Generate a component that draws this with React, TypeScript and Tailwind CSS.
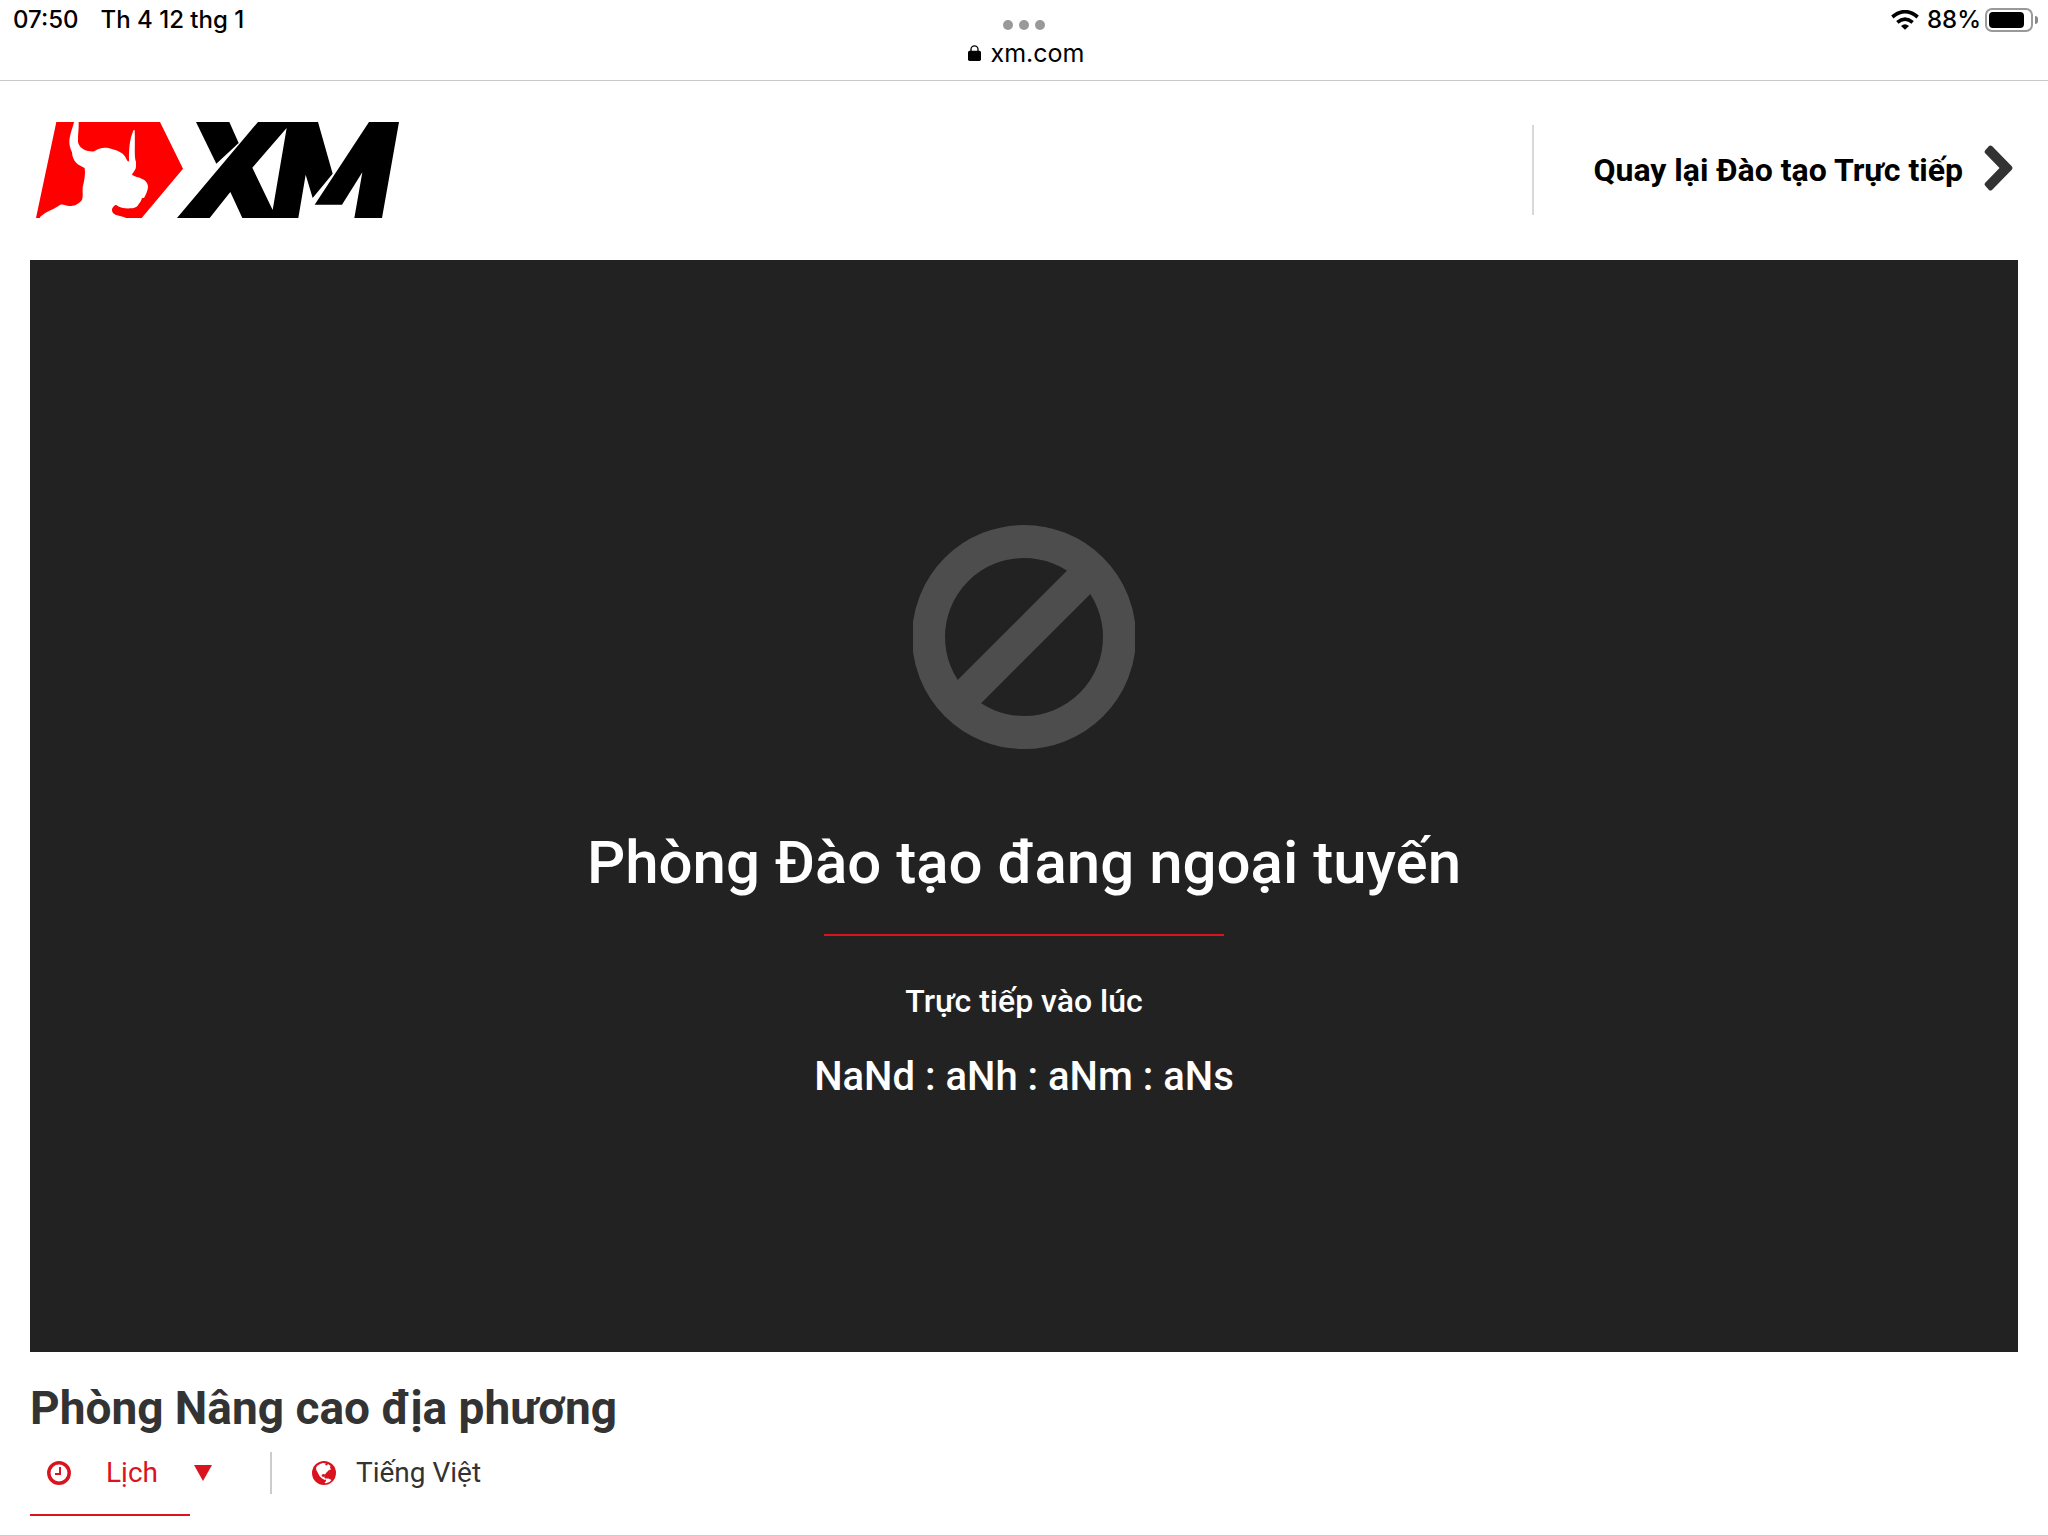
function Logo() {
  return (
    <svg viewBox="108 366 1089 288" className="block h-24 w-[363px]" aria-hidden="true">
      <path fill="#ff0000" d="M169 366H222C217 388 208 405 208 428C209 441 213 449 216 457C217 484 234 496 254 504C257 522 253 541 248 562C247 576 250 590 246 600C233 615 222 618 208 618C198 618 188 611 180 615C168 624 152 630 141 636C132 641 126 646 120 651V654H108Z" />
      <path fill="#ff0000" d="M236 366H480L549 506L425 654H378C370 648 356 648 346 644C338 641 334 632 337 625C341 617 347 613 350 616C360 624 377 626 392 625C406 624 413 620 416 612C421 607 424 601 426 594H432C439 583 444 570 444 559C443 547 434 539 425 536C414 530 405 531 396 524C400 515 408 511 408 498V486C402 470 406 440 404 390H401C393 408 386 430 387 484H383C378 475 373 464 366 460C351 450 340 449 325 444C309 442 298 444 288 451C280 457 272 454 264 453C249 449 236 439 234 425C233 406 237 386 236 366Z" />
      <path fill="#000" d="M588 366H688L716 429L649 491Z" />
      <path fill="#000" fillRule="evenodd" d="M774 366H954L998 521L938 594L917 524L895 654H727L691 576L629 654H531ZM860 384L757 503L818 630Z" />
      <path fill="#000" d="M1107 366H1197L1146 654H1063L1087 517L1026 614H944Z" />
    </svg>
  );
}

function WifiIcon() {
  return (
    <svg viewBox="0 0 84 60" className="h-5 w-7" aria-hidden="true">
      <path d="M4 21Q42 -11 80 21M19 37Q42 18 65 37" fill="none" stroke="#000" strokeWidth="11" />
      <path d="M30 48Q42 38 54 48L42 59Z" />
    </svg>
  );
}

function LockIcon() {
  return (
    <svg viewBox="0 0 39 48" className="h-4 w-[13px]" aria-hidden="true">
      <rect x="0" y="17" width="39" height="31" rx="5" />
      <path d="M9 22V13a10.500 10.500 0 0 1 21 0V22" fill="none" stroke="#000" strokeWidth="4" />
    </svg>
  );
}

function Battery() {
  return (
    <div className="flex items-center gap-0.5" role="img" aria-label="88%">
      <div className="h-6 w-12 rounded-[7px] border-2 border-[#999] p-0.5">
        <div className="h-4 w-[35px] rounded-[4px] bg-black" />
      </div>
      <div className="h-2 w-[3px] rounded-r-full bg-[#888]" />
    </div>
  );
}

function ChevronIcon() {
  return (
    <svg viewBox="0 0 29 46" className="h-[46px] w-[29px]" aria-hidden="true">
      <path fill="#333" d="M5 1Q6 0 8 1L28 21.500Q29 23 28 24.500L8 45Q6 46 5 45L1 40.500Q0 39 1 38L15.500 23L1 8Q0 7 1 5.500Z" />
    </svg>
  );
}

function BanIcon() {
  return (
    <svg viewBox="0 0 222 224" className="block h-56 w-[222px]" aria-hidden="true">
      <circle cx="111" cy="112" r="95.500" fill="none" stroke="#4d4d4d" strokeWidth="33" />
      <path d="M45 178L177 46" stroke="#4d4d4d" strokeWidth="33" />
    </svg>
  );
}

function ClockIcon() {
  return (
    <svg viewBox="0 0 24 24" className="size-6" aria-hidden="true">
      <circle cx="12" cy="12" r="10.200" fill="none" stroke="#d9141e" strokeWidth="3.500" />
      <path d="M13 6V13H8" fill="none" stroke="#d9141e" strokeWidth="2" />
    </svg>
  );
}

function GlobeIcon() {
  return (
    <svg viewBox="0 0 24 24" className="size-6" aria-hidden="true">
      <circle cx="12" cy="12" r="12" fill="#d9141e" />
      <path fill="#fff" d="M5 5L8 3L11 2L14 2.500L13 4L15 4.500L16 3L18.500 5L18 6.500L19 8.500L17 9L15.500 10.500L14 12L13 13.500L11.500 13L10 13.500L9.500 15L11 16L12.500 15.500L12.500 17L14.500 18L13 19L10 17.500L7.500 15L6 12L4.500 9.500L4 7Z" />
      <path fill="#fff" d="M14 17.500L16.500 17.500L19.500 19L17.500 21L14 22.300L12.500 22L14 20Z" />
    </svg>
  );
}

export default function App() {
  return (
    <div className="flex min-h-screen flex-col border-b border-[#ccc] bg-white font-[Roboto,sans-serif]">
      <header className="grid h-[81px] grid-cols-3 border-b border-[#c8c8c8] font-[Inter,sans-serif] text-black">
        <div className="flex h-10 items-center gap-[22px] pl-[13px] text-2xl font-medium">
          <span>07:50</span>
          <span>Th 4 12 thg 1</span>
        </div>
        <div className="flex flex-col items-center pt-5">
          <div className="flex gap-1.5">
            <span className="size-2.5 rounded-full bg-[#999]" />
            <span className="size-2.5 rounded-full bg-[#999]" />
            <span className="size-2.5 rounded-full bg-[#999]" />
          </div>
          <div className="mt-[7px] flex items-center gap-2.5 pl-1 text-[25px] leading-8">
            <LockIcon />
            <span>xm.com</span>
          </div>
        </div>
        <div className="flex h-10 items-center justify-end gap-2 pr-2.5 text-2xl font-medium">
          <WifiIcon />
          <div className="flex items-center gap-1">
            <span>88%</span>
            <Battery />
          </div>
        </div>
      </header>

      <div className="flex h-[178px] items-center justify-between pr-[35px] pl-9">
        <a href="#home" aria-label="XM">
          <Logo />
        </a>
        <a href="#live" className="flex h-[90px] items-center gap-[21px] border-l-2 border-[#d8d8d8] pl-[59px] text-[32px] font-bold text-black">
          <span>Quay lại Đào tạo Trực tiếp</span>
          <span className="pb-1">
            <ChevronIcon />
          </span>
        </a>
      </div>

      <main className="px-[30px] pt-px">
        <section className="flex h-[1092px] flex-col items-center bg-[#222] pt-[265px] font-medium text-white">
          <BanIcon />
          <h1 className="mt-[78px] text-[60px] leading-[72px]">Phòng Đào tạo đang ngoại tuyến</h1>
          <div className="mt-[35px] h-0.5 w-[400px] bg-[#d9141e]" />
          <p className="mt-[45px] text-[32px] leading-10">Trực tiếp vào lúc</p>
          <p className="mt-8 text-[40px] leading-12">NaNd : aNh : aNm : aNs</p>
        </section>

        <h2 className="mt-7 text-[46px] leading-[56px] font-bold text-[#333]">Phòng Nâng cao địa phương</h2>
        <div className="mt-4 flex h-[42px] items-center text-[28px]">
          <button type="button" className="flex h-[42px] items-center border-r-2 border-[#ccc] pr-[58px] pl-[17px] text-[#d9141e]">
            <ClockIcon />
            <span className="ml-[35px]">Lịch</span>
            <svg viewBox="0 0 18 16" className="ml-9 h-4 w-[18px]" aria-hidden="true">
              <path d="M0 0H18L9 16Z" fill="#d9141e" />
            </svg>
          </button>
          <div className="ml-10 flex items-center gap-5 text-[#333]">
            <GlobeIcon />
            <span>Tiếng Việt</span>
          </div>
        </div>
        <div className="mt-5 h-0.5 w-40 bg-[#d9141e]" />
      </main>
    </div>
  );
}
